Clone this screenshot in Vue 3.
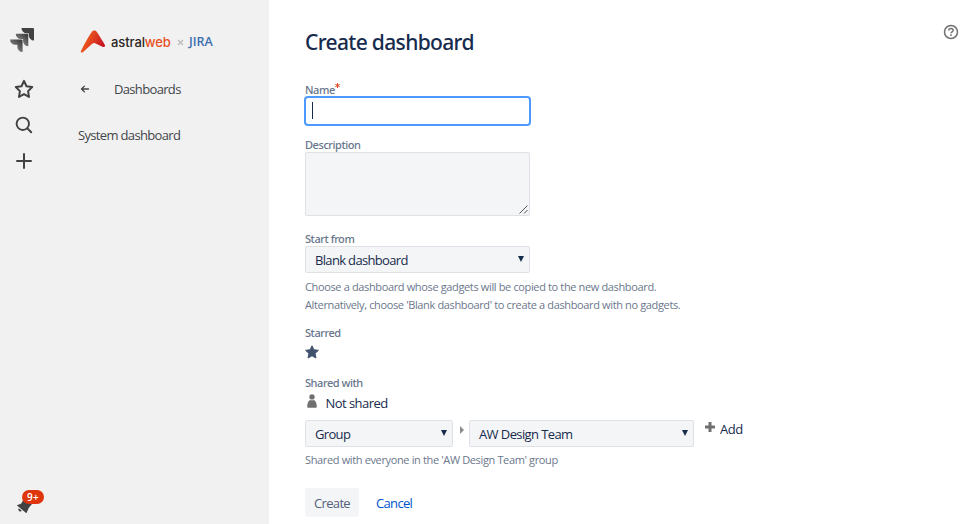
<script setup>
import { ref } from 'vue'

const name = ref('')
const shareType = 'Group'
const shareGroup = 'AW Design Team'
</script>

<template>
  <div class="app">
    <nav class="rail">
      <svg class="jira" width="24" height="24" viewBox="0 0 24 24">
        <defs>
          <linearGradient id="g1" x1="1" y1="0" x2="0.3" y2="0.75">
            <stop offset="0.2" stop-color="#424242" />
            <stop offset="1" stop-color="#858585" />
          </linearGradient>
        </defs>
        <path fill="#424242" d="M23.013 0H11.455a5.215 5.215 0 0 0 5.215 5.215h2.129v2.057A5.215 5.215 0 0 0 24 12.483V1.005A1.001 1.001 0 0 0 23.013 0z" />
        <path fill="url(#g1)" d="M17.294 5.757H5.736a5.215 5.215 0 0 0 5.215 5.214h2.129v2.058a5.218 5.218 0 0 0 5.215 5.214V6.758a1.001 1.001 0 0 0-1.001-1.001z" />
        <path fill="url(#g1)" d="M11.571 11.513H0a5.218 5.218 0 0 0 5.232 5.215h2.130v2.057A5.215 5.215 0 0 0 12.575 24V12.518a1.005 1.005 0 0 0-1.005-1.005z" />
      </svg>
      <svg class="icon star" width="20" height="20" viewBox="0 0 20 20">
        <path fill="none" stroke="#424242" stroke-width="2" stroke-linejoin="round" d="M10 1.900l2.500 5.300 5.700.8-4.100 4.100.9 5.800-5-2.800-5 2.800.9-5.800L1.800 8l5.700-.8z" />
      </svg>
      <svg class="icon search" width="20" height="20" viewBox="0 0 20 20">
        <circle cx="8.800" cy="8.800" r="6.200" fill="none" stroke="#424242" stroke-width="1.900" />
        <path stroke="#424242" stroke-width="2" stroke-linecap="round" d="M13.400 13.400l3.800 3.800" />
      </svg>
      <svg class="icon plus" width="20" height="20" viewBox="0 0 20 20">
        <path stroke="#424242" stroke-width="2" stroke-linecap="round" d="M10 3v14M3 10h14" />
      </svg>
      <div class="notify">
        <svg width="18" height="18" viewBox="0 0 18 18">
          <path fill="#424242" d="M.8 9.300L5 7.800 8 3l8 5-3 3.500-2.600 5.800z" />
          <path fill="#424242" d="M2.800 12.300l3 2.500a1.900 1.900 0 0 1-3-2.500z" />
        </svg>
        <span class="badge">9+</span>
      </div>
    </nav>

    <aside class="side">
      <div class="brand">
        <svg width="26" height="23" viewBox="0 0 26 23">
          <defs>
            <linearGradient id="g2" x1="0" y1="0.3" x2="1" y2="0.7">
              <stop offset="0.3" stop-color="#e8501e" />
              <stop offset="1" stop-color="#c30d23" />
            </linearGradient>
          </defs>
          <path fill="url(#g2)" d="M.9 21.200C4.500 14 8 7 12 1.500c1.200-1.500 3.600-1.500 4.700.3 2.800 4.200 6 9.200 8.200 13.200.6 1.600-.9 2.500-2.400 1.700L15.500 13.500c-1-.6-2-.5-3 .1L2.800 22.200c-1.200.7-2.400.2-1.900-1z" />
        </svg>
        <span class="astral">astral<b>web</b></span>
        <svg class="times" width="7" height="7" viewBox="0 0 7 7"><path stroke="#b8b8b8" stroke-width="1.100" d="M1 1l5 5M6 1L1 6" /></svg>
        <span class="jira-text">JIRA</span>
      </div>
      <div class="back">
        <svg width="10" height="9" viewBox="0 0 10 9"><path fill="none" stroke="#424242" stroke-width="1.300" stroke-linecap="round" stroke-linejoin="round" d="M8.500 4H1.500M4.400 1.100L1.500 4l2.900 2.900" /></svg>
        <span>Dashboards</span>
      </div>
      <div class="item">System dashboard</div>
    </aside>

    <main class="main">
      <header class="head">
        <h1>Create dashboard</h1>
        <svg width="16" height="16" viewBox="0 0 16 16">
          <circle cx="8" cy="8" r="6.500" fill="none" stroke="#707070" stroke-width="1.500" />
          <path fill="none" stroke="#707070" stroke-width="1.500" d="M5.800 6.500c0-2.800 4.400-2.700 4.400-.2 0 1.500-2.200 1.500-2.200 3" />
          <rect x="7.200" y="10.300" width="1.600" height="1.600" fill="#707070" />
        </svg>
      </header>

      <label class="label name">Name<svg width="5" height="5" viewBox="0 0 5 5"><path stroke="#de350b" stroke-width="0.900" d="M2.500 0v5M.3 1.300l4.400 2.400M4.700 1.300L.3 3.700" /></svg></label>
      <div class="input">{{ name }}<i class="caret"></i></div>

      <label class="label desc">Description</label>
      <div class="textarea">
        <svg width="9" height="9" viewBox="0 0 9 9"><path stroke="#555" stroke-width="1" d="M.5 8.500l8-8M5 8.500L8.500 5" /></svg>
      </div>

      <label class="label start">Start from</label>
      <div class="select"><span>Blank dashboard</span><i class="tri"></i></div>
      <p class="hint first">Choose a dashboard whose gadgets will be copied to the new dashboard.</p>
      <p class="hint">Alternatively, choose 'Blank dashboard' to create a dashboard with no gadgets.</p>

      <label class="label starred">Starred</label>
      <svg class="fav" width="14" height="14" viewBox="0 0 14 14"><path fill="#42526e" stroke="#42526e" stroke-linejoin="round" d="M7 .8l1.900 4 4.500.5-3.300 3.100.9 4.600L7 10.800 3 13l.9-4.600L.6 5.300l4.500-.5z" /></svg>

      <label class="label shared">Shared with</label>
      <div class="notshared">
        <svg width="10" height="14" viewBox="0 0 10 14"><circle cx="5" cy="2.900" r="2.700" fill="#707070" /><path fill="#707070" d="M2.500 6.200h5C9 7.500 9.800 10 9.800 12.500c0 .9-.5 1.300-1.300 1.300h-7c-.8 0-1.300-.4-1.300-1.300C.2 10 1 7.500 2.500 6.200z" /></svg>
        <span>Not shared</span>
      </div>
      <div class="share">
        <div class="select type"><span>{{ shareType }}</span><i class="tri"></i></div>
        <i class="next"></i>
        <div class="select"><span>{{ shareGroup }}</span><i class="tri"></i></div>
        <svg class="add-icon" width="10" height="10" viewBox="0 0 10 10"><path stroke="#707070" stroke-width="3" d="M5 0v10M0 5h10" /></svg>
        <span class="add">Add</span>
      </div>
      <p class="hint group">Shared with everyone in the 'AW Design Team' group</p>

      <div class="actions">
        <button class="create">Create</button>
        <a class="cancel">Cancel</a>
      </div>
    </main>
  </div>
</template>

<style>
body { background: #fff; }
</style>

<style scoped>
* { box-sizing: border-box; }
.app {
  display: flex;
  height: 524px;
  overflow: hidden;
  font-family: "Open Sans", "Noto Sans", sans-serif;
  font-size: 13px;
  line-height: 18px;
  letter-spacing: -0.66px;
  color: #172b4d;
  white-space: nowrap;
}
svg { display: block; flex: none; }
.rail {
  width: 48px;
  background: #f1f1f1;
  display: flex;
  flex-direction: column;
  align-items: center;
  padding-top: 28px;
}
.jira { margin-right: 4px; }
.star { margin-top: 27px; }
.search { margin-top: 16px; }
.plus { margin-top: 16px; }
.notify { position: relative; width: 48px; height: 18px; margin-top: 325px; padding-left: 16px; }
.badge {
  position: absolute;
  left: 22px;
  top: -6px;
  width: 22px;
  height: 14px;
  border-radius: 7px;
  background: #de350b;
  color: #fff;
  font: 600 10px/14px "Open Sans", sans-serif;
  letter-spacing: 0.2px;
  text-align: center;
}
.side { width: 221px; background: #f1f1f1; color: #42464b; padding: 30px 0 0 30px; }
.brand { display: flex; align-items: center; height: 23px; padding-left: 2px; }
.astral { margin-left: 5px; width: 60px; font: 500 13px/20px Inter, sans-serif; letter-spacing: -0.1px; color: #2b2523; }
.astral b { font-weight: 500; color: #e8501e; }
.times { margin: 1px 0 0 6px; }
.jira-text { margin-left: 5px; font: 600 12.500px/20px "Open Sans", sans-serif; letter-spacing: 0; color: #3d6fb0; }
.back { display: flex; align-items: center; height: 18px; margin-top: 27px; padding-left: 2px; }
.back span { margin-left: 24px; }
.item { margin-top: 28px; }
.main { flex: 1; padding: 0 15px 0 36px; display: flex; flex-direction: column; align-items: flex-start; }
.head { display: flex; align-self: stretch; justify-content: space-between; padding-top: 24px; height: 58px; }
.head h1 { margin: 2px 0 0; font-family: "Noto Sans", sans-serif; font-size: 21px; line-height: 32px; font-weight: 500; letter-spacing: -0.65px; }
.label { font-family: "Noto Sans", sans-serif; font-weight: 500; font-size: 11px; line-height: 14px; height: 14px; color: #67758b; letter-spacing: -0.44px; }
.name { display: flex; margin-top: 25px; margin-bottom: -1px; }
.name svg { margin-left: 0.500px; }
.input { width: 227px; height: 30px; margin-left: -1px; border: 2px solid #4c9aff; border-radius: 4px; padding: 4px 0 0 6px; }
.caret { display: block; width: 1px; height: 17px; background: #172b4d; }
.desc { margin-top: 12px; }
.textarea { width: 225px; height: 64px; border: 1px solid #dfe1e6; border-radius: 2px; background: #f4f5f7; display: flex; align-items: flex-end; justify-content: flex-end; padding: 1px; }
.start { margin-top: 16px; }
.select { width: 225px; height: 27px; border: 1px solid #dfe1e6; border-radius: 2px; background: #f4f5f7; display: flex; align-items: center; justify-content: space-between; padding: 0 5px 0 9px; }
.tri { border: 3px solid transparent; border-top: 6px solid #172b4d; border-bottom: 0; margin-top: -2px; }
.hint { margin: 0; font-size: 11px; line-height: 18px; letter-spacing: -0.36px; color: #6b778c; }
.first { margin-top: 5px; }
.starred { margin-top: 12px; }
.fav { margin-top: 5px; }
.shared { margin-top: 17px; }
.notshared { display: flex; height: 18px; margin-top: 4px; padding-left: 1.500px; letter-spacing: -0.55px; }
.notshared span { margin-left: 9px; }
.share { display: flex; height: 27px; margin-top: 8px; }
.type { width: 148px; }
.next { height: 8px; margin: 6px 5px 0 7px; border: 4px solid transparent; border-left-color: #8c8c8c; border-right: 0; }
.share .select:nth-child(3) { letter-spacing: -0.6px; }
.add-icon { margin: 2px 5px 0 11px; }
.add { letter-spacing: -0.5px; }
.group { margin-top: 4px; }
.actions { display: flex; margin-top: 19px; height: 29px; align-items: center; }
.create { width: 54px; height: 29px; border: 0; border-radius: 3px; background: #f4f5f7; color: #505f79; font: inherit; letter-spacing: inherit; padding: 0; }
.cancel { margin-left: 17px; color: #0052cc; }
</style>
